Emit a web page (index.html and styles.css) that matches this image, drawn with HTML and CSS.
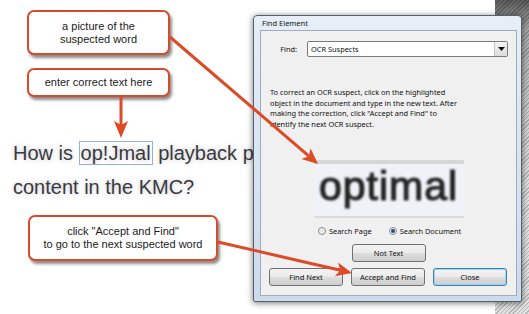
FILE: index.html
```html
<!DOCTYPE html>
<html lang="en">
<head>
  <meta charset="UTF-8" />
  <title>Find Element – OCR Suspects</title>
  <link rel="stylesheet" href="styles.css">
</head>
<body>
  <div class="stage">
    <div class="doc">
      <p class="doc-text">How is <span class="ocr-box">op!Jmal</span> playback provided for<br>content in the KMC?</p>
    </div>

    <div class="desk">
      <div class="dialog">
        <div class="dialog-title">Find Element</div>
        <div class="dialog-body">
          <div class="find-row">
            <span class="find-label">Find:</span>
            <div class="select">
              <span>OCR Suspects</span>
              <span class="select-btn">
                <svg width="7" height="4" viewBox="0 0 7 4"><path d="M0 0h7L3.5 4z" fill="#111"/></svg>
              </span>
            </div>
          </div>

          <p class="help">To correct an OCR suspect, click on the highlighted<br>object in the document and type in the new text. After<br>making the correction, click "Accept and Find" to<br>identify the next OCR suspect.</p>

          <div class="suspect-img"><span>optimal</span></div>

          <div class="radio-row">
            <label class="radio"><span class="dot"></span>Search Page</label>
            <label class="radio"><span class="dot checked"></span>Search Document</label>
          </div>

          <div class="btn-row center">
            <button class="btn">Not Text</button>
          </div>
          <div class="btn-row">
            <button class="btn">Find Next</button>
            <button class="btn">Accept and Find</button>
            <button class="btn default">Close</button>
          </div>
        </div>
      </div>
    </div>

    <div class="callout callout-picture">a picture of the<br>suspected word</div>
    <div class="callout callout-enter">enter correct text here</div>
    <div class="callout callout-accept">click "Accept and Find"<br>to go to the next suspected word</div>

    <svg class="arrows" width="529" height="314" viewBox="0 0 529 314">
      <g stroke="#dc4a26" stroke-width="3" fill="none">
        <path d="M170 37 L308.9 156.2"/>
        <path d="M218 242 L340.3 270.3"/>
        <path d="M121 97 L121 126"/>
      </g>
      <g fill="#dc4a26">
        <path d="M318 164 L310.5 148.3 L308.9 156.2 L301.3 158.9 Z"/>
        <path d="M352 273 L338 262.6 L340.3 270.3 L334.8 276.2 Z"/>
        <path d="M121 138 L128 121 L121 125 L114 121 Z"/>
      </g>
    </svg>
  </div>
</body>
</html>
```

FILE: styles.css
```css
* {
  box-sizing: border-box;
}

body {
  margin: 0;
  background: #ffffff;
  font-family: "Liberation Sans", Arial, sans-serif;
}

.stage {
  position: relative;
  width: 529px;
  height: 314px;
  overflow: hidden;
  display: grid;
  grid-template-columns: 253px 276px;
}

/* document text on the left, partly hidden by the dialog */
.doc {
  overflow: hidden;
  padding: 136px 0 0 13px;
}

.doc-text {
  margin: 0;
  font-size: 20px;
  line-height: 34px;
  color: #3a3a3a;
  white-space: nowrap;
  text-shadow: 0 0 5px rgba(90, 90, 130, 0.35);
}

.ocr-box {
  border: 1px solid #8fb6d6;
  padding: 0 1px;
}

/* window behind + dialog */
.desk {
  position: relative;
  padding-top: 15px;
}

.desk::before {
  content: "";
  position: absolute;
  left: 242px;
  top: 0;
  right: 0;
  bottom: 0;
  background:
    linear-gradient(to bottom, rgba(0, 0, 0, 0.6) 0, rgba(0, 0, 0, 0.25) 30px, rgba(0, 0, 0, 0.08) 120px, rgba(0, 0, 0, 0) 200px),
    repeating-linear-gradient(135deg, #b4b4b4 0 1px, #e2e2e2 1px 3px);
}

.dialog {
  position: relative;
  width: 269px;
  height: 287px;
  background: linear-gradient(#e6eef8, #cbdbec);
  border: 1px solid #56616d;
  border-radius: 4px 4px 2px 2px;
  box-shadow: 0 1px 6px rgba(0, 0, 0, 0.55);
  padding: 0 4px 5px 6px;
  display: flex;
  flex-direction: column;
  font-family: "Noto Sans", sans-serif;
  font-size: 7.4px;
  color: #111;
}

.dialog-title {
  height: 14px;
  line-height: 15px;
  padding-left: 2px;
  font-size: 7.5px;
}

.dialog-body {
  flex: 1;
  background: #f0f0f0;
  border: 1px solid #9eacbb;
  display: flex;
  flex-direction: column;
}

.find-row {
  display: grid;
  grid-template-columns: 46px 201px;
  align-items: center;
  margin-top: 10px;
}

.find-label {
  text-align: right;
  padding-right: 10px;
}

.select {
  height: 16px;
  background: #fff;
  border: 1px solid #7b7b7b;
  border-radius: 2px;
  display: flex;
  align-items: center;
  padding-left: 3px;
}

.select span:first-child {
  flex: 1;
}

.select-btn {
  width: 13px;
  height: 14px;
  border-left: 1px solid #c8c8c8;
  background: linear-gradient(#f4f4f4, #dcdcdc);
  display: flex;
  align-items: center;
  justify-content: center;
}

.help {
  margin: 30px 0 0 9px;
  line-height: 10.7px;
  white-space: nowrap;
}

.suspect-img {
  align-self: center;
  width: 150px;
  height: 58px;
  margin-top: 30px;
  background: #f1f2f8;
  border-top: 4px solid #d6d6d6;
  border-bottom: 2px solid #dcdcdc;
  text-align: center;
  overflow: hidden;
}

.suspect-img span {
  display: block;
  font-family: "Liberation Sans", Arial, sans-serif;
  font-size: 41px;
  line-height: 44px;
  letter-spacing: 1px;
  color: #222;
  -webkit-text-stroke: 1.2px #2a2a2a;
  filter: blur(0.9px);
}

.radio-row {
  display: flex;
  gap: 17px;
  margin-top: 8px;
  padding-left: 57px;
  height: 10px;
  align-items: center;
}

.radio {
  display: flex;
  align-items: center;
  gap: 3px;
}

.dot {
  width: 8px;
  height: 8px;
  border-radius: 50%;
  border: 1px solid #8a8a8a;
  background: radial-gradient(circle, #e2e2e2, #f8f8f8);
  display: flex;
  align-items: center;
  justify-content: center;
}

.dot.checked::after {
  content: "";
  width: 4px;
  height: 4px;
  border-radius: 50%;
  background: #1d4e86;
}

.btn-row {
  display: flex;
  gap: 8px;
  margin-top: 6px;
  padding-left: 8px;
}

.btn-row.center {
  justify-content: center;
  padding-left: 0;
  margin-top: 8px;
}

.btn {
  width: 74px;
  height: 18px;
  padding: 0;
  border: 1px solid #707070;
  border-radius: 3px;
  background: linear-gradient(#f3f3f3 0, #ebebeb 50%, #dddddd 50%, #cfcfcf 100%);
  font-family: "Noto Sans", sans-serif;
  font-size: 7.5px;
  color: #111;
}

.btn.default {
  border-color: #3c7fb1;
  box-shadow: inset 0 0 0 1px #9fd3f3;
}

/* annotations */
.callout {
  position: absolute;
  background: #fff;
  border: 2px solid #d64b2b;
  border-radius: 7px;
  box-shadow: 2px 3px 3px rgba(0, 0, 0, 0.45);
  display: flex;
  align-items: center;
  justify-content: center;
  text-align: center;
  font-size: 11px;
  line-height: 13px;
  color: #1a1a1a;
}

.callout-picture {
  left: 27px;
  top: 10px;
  width: 143px;
  height: 45px;
}

.callout-enter {
  left: 27px;
  top: 68px;
  width: 143px;
  height: 29px;
}

.callout-accept {
  left: 28px;
  top: 215px;
  width: 190px;
  height: 46px;
}

.arrows {
  position: absolute;
  left: 0;
  top: 0;
  pointer-events: none;
}
```
